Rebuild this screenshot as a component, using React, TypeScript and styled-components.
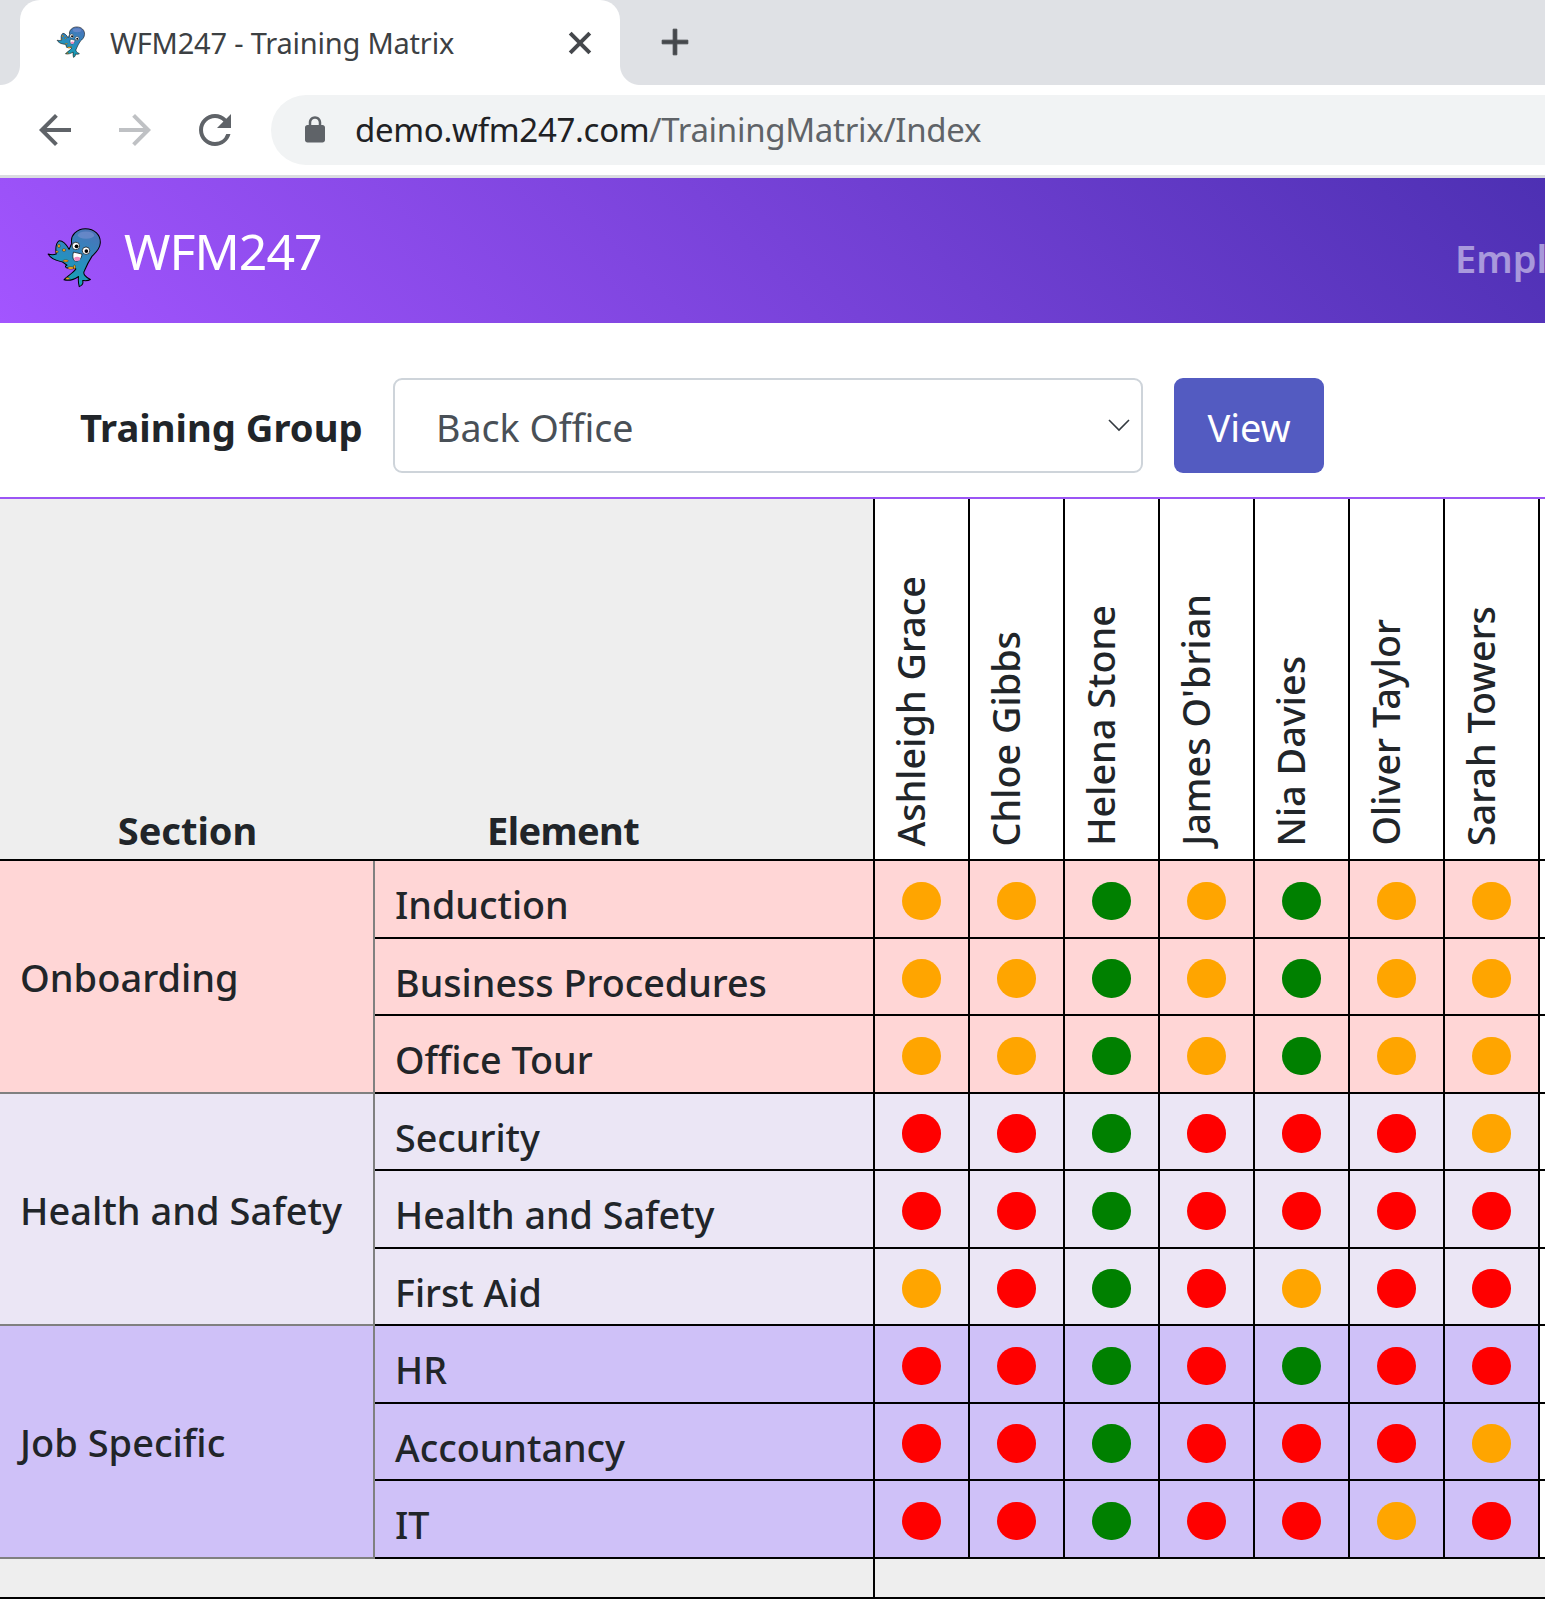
import React from 'react'
import styled, { createGlobalStyle } from 'styled-components'

const GlobalStyle = createGlobalStyle`
    html, body {
        margin: 0;
        padding: 0;
        background: #fff;
        overflow: hidden;
    }
    body {
        font-family: "Noto Sans", "Open Sans", sans-serif;
        color: #212529;
    }
    * {
        box-sizing: border-box;
    }
`

const Page = styled.div`
    width: 1545px;
    height: 1613px;
    overflow: hidden;
`

const TabStrip = styled.div`
    height: 85px;
    background: #dfe1e5;
    display: flex;
    align-items: stretch;
    padding-left: 20px;
`

const Tab = styled.div`
    position: relative;
    width: 600px;
    background: #fff;
    border-radius: 20px 20px 0 0;
    display: flex;
    align-items: center;
    padding-left: 36px;

    &::before,
    &::after {
        content: '';
        position: absolute;
        bottom: 0;
        width: 20px;
        height: 20px;
    }
    &::before {
        left: -20px;
        background: radial-gradient(circle at 0 0, #dfe1e5 19.5px, #fff 20.5px);
    }
    &::after {
        right: -20px;
        background: radial-gradient(circle at 100% 0, #dfe1e5 19.5px, #fff 20.5px);
    }
`

const TabTitle = styled.span`
    margin-left: 24px;
    font-size: 29px;
    letter-spacing: -0.2px;
    color: #3c4043;
    white-space: nowrap;
    flex: 1;
`

const TabClose = styled.svg`
    width: 36px;
    height: 36px;
    margin-right: 22px;
    fill: #45484c;
    stroke: #45484c;
    stroke-width: 0.7;
`

const NewTab = styled.svg`
    width: 44px;
    height: 44px;
    margin: 20px 0 0 33px;
    fill: #45484c;
    stroke: #45484c;
    stroke-width: 0.5;
`

const Toolbar = styled.div`
    height: 93px;
    border-bottom: 3px solid #dadce0;
    display: flex;
    align-items: center;
    gap: 32px;
    padding: 0 0 1px 31px;
`

const NavIcon = styled.svg<{ $off?: boolean }>`
    width: 48px;
    height: 48px;
    flex: none;
    fill: ${(p) => (p.$off ? '#bfc1c4' : '#5f6368')};
`

const AddressBar = styled.div`
    flex: 1;
    height: 70px;
    margin-right: -40px;
    border-radius: 35px;
    background: #f1f3f4;
    display: flex;
    align-items: center;
    padding-left: 29px;
    gap: 25px;
`

const LockIcon = styled.svg`
    width: 30px;
    height: 30px;
    fill: #5f6368;
`

const Url = styled.span`
    font-size: 33px;
    letter-spacing: -0.3px;
    color: #5f6368;
    white-space: nowrap;

    b {
        font-weight: 400;
        color: #202124;
    }
`

const Navbar = styled.div`
    height: 145px;
    background: linear-gradient(45deg, #a355ff, #4d30b3);
    display: flex;
    align-items: center;
    padding-left: 46px;
    overflow: hidden;
`

const BrandMark = styled.div`
    margin-top: 14px;
    flex: none;
`

const Brand = styled.span`
    margin-left: 21px;
    font-size: 50px;
    letter-spacing: -1px;
    color: #fff;
`

const NavLink = styled.span`
    margin-left: auto;
    width: 90px;
    overflow: hidden;
    white-space: nowrap;
    font-size: 38px;
    font-weight: 600;
    color: rgba(255, 255, 255, 0.5);
    padding-top: 14px;
`

const FilterRow = styled.div`
    height: 174px;
    padding: 55px 0 0 80px;
    display: flex;
    align-items: flex-start;
`

const FilterLabel = styled.span`
    width: 313px;
    height: 95px;
    display: flex;
    align-items: center;
    font-size: 38.2px;
    font-weight: 700;
    padding-top: 2px;
    white-space: nowrap;
`

const SelectBox = styled.div`
    width: 750px;
    height: 95px;
    border: 2px solid #ced4da;
    border-radius: 9px;
    display: flex;
    align-items: center;
    justify-content: space-between;
    padding: 4px 10px 0 41px;
    font-size: 37.6px;
    color: #495057;
`

const Chevron = styled.svg`
    width: 24px;
    height: 14px;
    margin-top: -6px;
    fill: none;
    stroke: #343a40;
    stroke-width: 1.6;
`

const ViewButton = styled.button`
    width: 150px;
    height: 95px;
    margin-left: 31px;
    border: none;
    border-radius: 9px;
    background: #535bc1;
    color: #fff;
    font-family: inherit;
    font-size: 38px;
    padding: 2px 0 0;
`

const Matrix = styled.div`
    border-top: 2px solid #9b55f5;
`

const HeadRow = styled.div`
    display: grid;
    grid-template-columns: 375px 500px repeat(7, 95px);
    height: 362px;
    border-bottom: 2px solid #000;
`

const HeadTitle = styled.div<{ $last?: boolean }>`
    background: #eee;
    font-size: 38px;
    font-weight: 700;
    display: flex;
    align-items: flex-end;
    padding-bottom: 3px;
    justify-content: ${(p) => (p.$last ? 'flex-start' : 'center')};
    padding-left: ${(p) => (p.$last ? '112px' : '0')};
    letter-spacing: ${(p) => (p.$last ? '-0.6px' : '0')};
    border-right: ${(p) => (p.$last ? '2px solid #000' : 'none')};
`

const NameCell = styled.div`
    border-right: 2px solid #000;
    display: flex;
    justify-content: center;
    align-items: flex-end;
    padding: 0 22px 13px 0;
`

const Name = styled.span`
    writing-mode: vertical-rl;
    transform: rotate(180deg);
    font-size: 37.8px;
    font-weight: 500;
    line-height: 44px;
    white-space: nowrap;
`

const Group = styled.div`
    display: flex;
`

const SectionCell = styled.div<{ $bg: string }>`
    width: 375px;
    flex: none;
    background: ${(p) => p.$bg};
    border-right: 2px solid #808080;
    border-bottom: 2px solid #808080;
    display: flex;
    align-items: center;
    padding: 2px 0 0 20px;
    font-size: 38px;
    font-weight: 500;
`

const Rows = styled.div`
    flex: 1;
`

const Row = styled.div`
    height: 77.5px;
    display: grid;
    grid-template-columns: 500px repeat(7, 95px);
    border-bottom: 2px solid #000;
`

const ElementCell = styled.div<{ $bg: string }>`
    background: ${(p) => p.$bg};
    border-right: 2px solid #000;
    display: flex;
    align-items: center;
    padding: 12px 0 0 20px;
    font-size: 37.7px;
    font-weight: 500;
    white-space: nowrap;
`

const DotCell = styled.div<{ $bg: string }>`
    background: ${(p) => p.$bg};
    border-right: 2px solid #000;
    display: flex;
    align-items: center;
    justify-content: center;
    padding-top: 4px;
`

const Dot = styled.span<{ $color: string }>`
    width: 38.5px;
    height: 38.5px;
    border-radius: 50%;
    background: ${(p) => p.$color};
`

const FooterRow = styled.div`
    height: 40px;
    background: #eee;
    border-bottom: 2px solid #000;
`

const FooterLeft = styled.div`
    width: 875px;
    height: 100%;
    border-right: 2px solid #000;
`

const names = ['Ashleigh Grace', 'Chloe Gibbs', 'Helena Stone', "James O'brian", 'Nia Davies', 'Oliver Taylor', 'Sarah Towers']

const status: { [key: string]: string } = { a: 'orange', g: 'green', r: 'red' }

const groups = [
    {
        name: 'Onboarding',
        bg: '#ffd6d6',
        rows: [
            { title: 'Induction', dots: 'aagagaa' },
            { title: 'Business Procedures', dots: 'aagagaa' },
            { title: 'Office Tour', dots: 'aagagaa' },
        ],
    },
    {
        name: 'Health and Safety',
        bg: '#ebe6f5',
        rows: [
            { title: 'Security', dots: 'rrgrrra' },
            { title: 'Health and Safety', dots: 'rrgrrrr' },
            { title: 'First Aid', dots: 'argrarr' },
        ],
    },
    {
        name: 'Job Specific',
        bg: '#cfc1f8',
        rows: [
            { title: 'HR', dots: 'rrgrgrr' },
            { title: 'Accountancy', dots: 'rrgrrra' },
            { title: 'IT', dots: 'rrgrrar' },
        ],
    },
]

const Octopus = ({ size }: { size: number }) => (
    <svg width={size} height={size * 1.07} viewBox="52 52 168 180" style={{ flex: 'none', display: 'block' }}>
        <defs>
            <linearGradient id="octo" x1="0.7" y1="0" x2="0.3" y2="1">
                <stop offset="0" stopColor="#4a74b8" />
                <stop offset="0.5" stopColor="#2a8cc0" />
                <stop offset="1" stopColor="#12a8ae" />
            </linearGradient>
        </defs>
        <path
            d="M128 100 C122 76 145 57 168 57 C195 57 214 75 212 100 C211 118 198 128 188 138 C180 150 172 165 165 182 C160 190 168 200 183 207 C175 212 165 210 160 210 C162 216 160 224 150 228 C148 220 146 210 148 198 C138 205 120 212 105 208 C112 198 130 190 140 176 C130 168 122 176 112 172 C108 170 108 166 114 165 L100 155 C90 152 70 152 58 132 C66 134 76 134 82 132 C80 118 78 102 90 93 C100 92 112 104 120 118 Z"
            fill="url(#octo)"
            stroke="#000"
            strokeWidth="3"
            strokeLinejoin="round"
        />
        <ellipse cx="170" cy="76" rx="24" ry="11" fill="#7f93d4" opacity="0.55" />
        <circle cx="140" cy="108" r="11" fill="#fff" stroke="#000" strokeWidth="2" />
        <circle cx="142" cy="109" r="5.5" fill="#000" />
        <circle cx="170" cy="122" r="11" fill="#fff" stroke="#000" strokeWidth="2" />
        <circle cx="171" cy="123" r="5.5" fill="#000" />
        <path d="M133 126 L158 132 C158 146 146 156 136 152 C130 146 130 136 133 126 Z" fill="#fff" stroke="#000" strokeWidth="2" />
        <ellipse cx="144" cy="146" rx="9" ry="6.5" fill="#f08ac0" />
        <g fill="#f5a623" stroke="#000" strokeWidth="1">
            <ellipse cx="90" cy="108" rx="4" ry="5" />
            <ellipse cx="105" cy="120" rx="5" ry="4" />
            <ellipse cx="84" cy="125" rx="4" ry="3" />
            <ellipse cx="110" cy="152" rx="8" ry="3" />
            <ellipse cx="125" cy="173" rx="9" ry="4" />
            <ellipse cx="116" cy="204" rx="6" ry="3" />
            <ellipse cx="136" cy="170" rx="3" ry="6" />
        </g>
    </svg>
)

const App = () => {
    return (
        <Page>
            <GlobalStyle />
            <TabStrip>
                <Tab>
                    <Octopus size={30} />
                    <TabTitle>WFM247 - Training Matrix</TabTitle>
                    <TabClose viewBox="0 0 24 24">
                        <path d="M19 6.41 17.59 5 12 10.59 6.41 5 5 6.41 10.59 12 5 17.59 6.41 19 12 13.41 17.59 19 19 17.59 13.41 12z" />
                    </TabClose>
                </Tab>
                <NewTab viewBox="0 0 24 24">
                    <path d="M19 13h-6v6h-2v-6H5v-2h6V5h2v6h6v2z" />
                </NewTab>
            </TabStrip>
            <Toolbar>
                <NavIcon viewBox="0 0 24 24">
                    <path d="M20 11H7.83l5.59-5.59L12 4l-8 8 8 8 1.41-1.41L7.83 13H20v-2z" />
                </NavIcon>
                <NavIcon $off viewBox="0 0 24 24">
                    <path d="M12 4l-1.41 1.41L16.17 11H4v2h12.17l-5.58 5.59L12 20l8-8z" />
                </NavIcon>
                <NavIcon viewBox="0 0 24 24">
                    <path d="M17.65 6.35A7.958 7.958 0 0012 4c-4.42 0-7.99 3.58-7.99 8s3.57 8 7.99 8c3.73 0 6.84-2.55 7.73-6h-2.08A5.99 5.99 0 0112 18c-3.31 0-6-2.69-6-6s2.69-6 6-6c1.66 0 3.14.69 4.22 1.78L13 11h7V4l-2.35 2.35z" />
                </NavIcon>
                <AddressBar>
                    <LockIcon viewBox="0 0 24 24">
                        <path d="M18 8h-1V6c0-2.76-2.24-5-5-5S7 3.24 7 6v2H6c-1.1 0-2 .9-2 2v10c0 1.1.9 2 2 2h12c1.1 0 2-.9 2-2V10c0-1.1-.9-2-2-2zM9 6c0-1.66 1.34-3 3-3s3 1.34 3 3v2H9V6z" />
                    </LockIcon>
                    <Url>
                        <b>demo.wfm247.com</b>/TrainingMatrix/Index
                    </Url>
                </AddressBar>
            </Toolbar>
            <Navbar>
                <BrandMark>
                    <Octopus size={57} />
                </BrandMark>
                <Brand>WFM247</Brand>
                <NavLink>Employees</NavLink>
            </Navbar>
            <FilterRow>
                <FilterLabel>Training Group</FilterLabel>
                <SelectBox>
                    Back Office
                    <Chevron viewBox="0 0 24 14">
                        <path d="M2 2 L12 12 L22 2" />
                    </Chevron>
                </SelectBox>
                <ViewButton>View</ViewButton>
            </FilterRow>
            <Matrix>
                <HeadRow>
                    <HeadTitle>Section</HeadTitle>
                    <HeadTitle $last>Element</HeadTitle>
                    {names.map((name) => (
                        <NameCell key={name}>
                            <Name>{name}</Name>
                        </NameCell>
                    ))}
                </HeadRow>
                {groups.map((group) => (
                    <Group key={group.name}>
                        <SectionCell $bg={group.bg}>{group.name}</SectionCell>
                        <Rows>
                            {group.rows.map((row) => (
                                <Row key={row.title}>
                                    <ElementCell $bg={group.bg}>{row.title}</ElementCell>
                                    {row.dots.split('').map((dot, index) => (
                                        <DotCell $bg={group.bg} key={index}>
                                            <Dot $color={status[dot]} />
                                        </DotCell>
                                    ))}
                                </Row>
                            ))}
                        </Rows>
                    </Group>
                ))}
                <FooterRow>
                    <FooterLeft />
                </FooterRow>
            </Matrix>
        </Page>
    )
}
export default App
